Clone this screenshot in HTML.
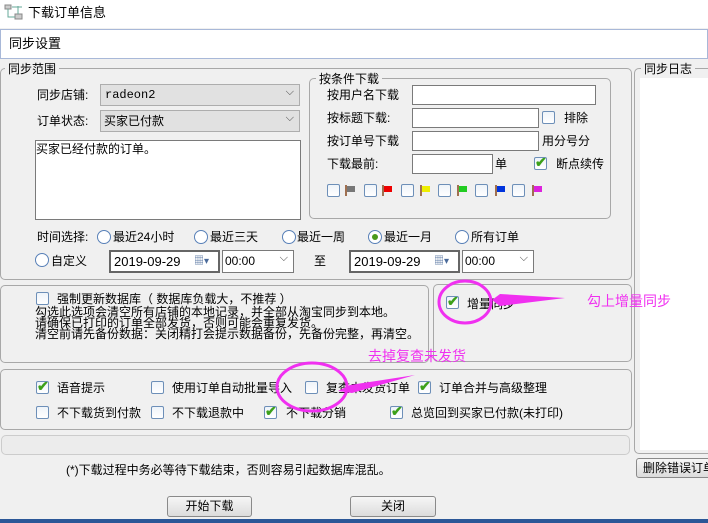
<!DOCTYPE html>
<html><head><meta charset="utf-8"><style>
*{margin:0;padding:0;box-sizing:border-box}
body{width:708px;height:523px;background:#f0f0f0;position:relative;overflow:hidden;font-family:"Liberation Sans","Noto Sans CJK SC",sans-serif;font-size:12px;color:#000}
.a{position:absolute;white-space:nowrap;line-height:14px}
.g{position:absolute;border:1px solid #a8a8a8;border-radius:5px}
.in{position:absolute;background:#fff;border:1px solid #7a7a7a}
.cb{position:absolute;width:13px;height:13px;border:1px solid #6d8fb8;background:linear-gradient(#eef3f9,#fff);border-radius:2px}
.ck::after{content:"✔";position:absolute;left:0;top:-4px;color:#3ca01a;font-size:14px;font-weight:bold}
.rd{position:absolute;width:14px;height:14px;border:1px solid #5880b8;border-radius:50%;background:#fff}
.rd.on::after{content:"";position:absolute;left:3px;top:3px;width:6px;height:6px;border-radius:50%;background:#4a9a1a}
.cmb{position:absolute;background:#e1e1e1;border:1px solid #adadad}
.cmb::after,.tm::after{content:"⌵";position:absolute;right:5px;top:1px;font-size:11px;color:#444}
.btn{position:absolute;border:1px solid #8a8a8a;border-radius:3px;background:linear-gradient(#f6f6f6,#dcdcdc);text-align:center;line-height:19px}
.flag{position:absolute;width:12px;height:10px}
.flag::before{content:"";position:absolute;left:0;top:0;width:2px;height:11px;background:#a07050}
.flag::after{content:"";position:absolute;left:2px;top:1px;width:8px;height:6px;background:var(--c)}
.m{color:#f030f0}
</style></head><body>
<div class="a" style="left:0;top:0;width:708px;height:28px;background:#fff"></div>
<svg class="a" style="left:4px;top:3px" width="20" height="18"><rect x="1" y="2" width="6" height="4" fill="#ccc" stroke="#888"/><rect x="11" y="11" width="7" height="5" fill="#ccc" stroke="#888"/><path d="M4 6v8h7M14 3v8M8 4h10" stroke="#6a9" fill="none"/></svg>
<div class="a" style="left:28px;top:6px;font-size:13px">下载订单信息</div>
<div class="a" style="left:0;top:29px;width:708px;height:30px;background:#fff;border:1px solid #a8b8d8"></div>
<div class="a" style="left:9px;top:37px;font-size:13px">同步设置</div>

<div class="g" style="left:0;top:68px;width:632px;height:212px"></div>
<div class="a" style="left:5px;top:62px;background:#f0f0f0;padding:0 3px;font-size:12px">同步范围</div>
<div class="g" style="left:634px;top:68px;width:80px;height:386px"></div>
<div class="a" style="left:640px;top:78px;width:70px;height:372px;background:#fff"></div>
<div class="a" style="left:641px;top:62px;background:#f0f0f0;padding:0 3px">同步日志</div>

<div class="a" style="left:37px;top:88px">同步店铺:</div>
<div class="cmb" style="left:100px;top:84px;width:200px;height:22px"><span class="a" style="left:4px;top:3px;font-family:'Liberation Mono',monospace">radeon2</span></div>
<div class="a" style="left:37px;top:114px">订单状态:</div>
<div class="cmb" style="left:100px;top:110px;width:200px;height:22px"><span class="a" style="left:3px;top:3px">买家已付款</span></div>
<div class="in" style="left:35px;top:140px;width:266px;height:80px"><span class="a" style="left:0;top:1px">买家已经付款的订单。</span></div>

<div class="a" style="left:37px;top:230px">时间选择:</div>
<div class="rd" style="left:97px;top:230px"></div><div class="a" style="left:113px;top:230px">最近24小时</div>
<div class="rd" style="left:194px;top:230px"></div><div class="a" style="left:210px;top:230px">最近三天</div>
<div class="rd" style="left:282px;top:230px"></div><div class="a" style="left:297px;top:230px">最近一周</div>
<div class="rd on" style="left:368px;top:230px"></div><div class="a" style="left:384px;top:230px">最近一月</div>
<div class="rd" style="left:455px;top:230px"></div><div class="a" style="left:471px;top:230px">所有订单</div>
<div class="rd" style="left:35px;top:253px"></div><div class="a" style="left:51px;top:254px">自定义</div>
<div class="in" style="left:109px;top:250px;width:111px;height:23px;border:2px solid #666"><span class="a" style="left:3px;top:3px;font-size:13px">2019-09-29</span><span class="a" style="left:83px;top:3px;color:#4a6a9a;font-size:10px">▦▾</span></div>
<div class="in tm" style="left:222px;top:250px;width:72px;height:23px"><span class="a" style="left:2px;top:3px">00:00</span></div>
<div class="a" style="left:314px;top:254px">至</div>
<div class="in" style="left:349px;top:250px;width:111px;height:23px;border:2px solid #666"><span class="a" style="left:3px;top:3px;font-size:13px">2019-09-29</span><span class="a" style="left:83px;top:3px;color:#4a6a9a;font-size:10px">▦▾</span></div>
<div class="in tm" style="left:462px;top:250px;width:72px;height:23px"><span class="a" style="left:2px;top:3px">00:00</span></div>

<div class="g" style="left:309px;top:78px;width:302px;height:141px"></div>
<div class="a" style="left:316px;top:72px;background:#f0f0f0;padding:0 3px">按条件下载</div>
<div class="a" style="left:327px;top:88px">按用户名下载</div><div class="in" style="left:412px;top:85px;width:184px;height:20px"></div>
<div class="a" style="left:327px;top:111px">按标题下载:</div><div class="in" style="left:412px;top:108px;width:127px;height:20px"></div>
<div class="cb" style="left:542px;top:111px"></div><div class="a" style="left:564px;top:111px">排除</div>
<div class="a" style="left:327px;top:134px">按订单号下载</div><div class="in" style="left:412px;top:131px;width:127px;height:20px"></div>
<div class="a" style="left:542px;top:134px">用分号分</div>
<div class="a" style="left:327px;top:157px">下载最前:</div><div class="in" style="left:412px;top:154px;width:81px;height:20px"></div>
<div class="a" style="left:495px;top:157px">单</div>
<div class="cb ck" style="left:534px;top:157px"></div><div class="a" style="left:556px;top:157px">断点续传</div>
<div class="cb" style="left:327px;top:184px"></div><div class="flag" style="left:345px;top:185px;--c:#777"></div>
<div class="cb" style="left:364px;top:184px"></div><div class="flag" style="left:382px;top:185px;--c:#e00"></div>
<div class="cb" style="left:401px;top:184px"></div><div class="flag" style="left:420px;top:185px;--c:#ee0"></div>
<div class="cb" style="left:438px;top:184px"></div><div class="flag" style="left:457px;top:185px;--c:#2c2"></div>
<div class="cb" style="left:475px;top:184px"></div><div class="flag" style="left:495px;top:185px;--c:#03d"></div>
<div class="cb" style="left:512px;top:184px"></div><div class="flag" style="left:532px;top:185px;--c:#d2d"></div>

<div class="g" style="left:0;top:285px;width:429px;height:78px"></div>
<div class="cb" style="left:36px;top:292px"></div>
<div class="a" style="left:57px;top:292px">强制更新数据库（ 数据库负载大，不推荐 ）</div>
<div class="a" style="left:35px;top:307px;line-height:11px">勾选此选项会清空所有店铺的本地记录，并全部从淘宝同步到本地。<br>请确保已打印的订单全部发货，否则可能会重复发货。<br>清空前请先备份数据：关闭精打会提示数据备份，先备份完整，再清空。</div>
<div class="g" style="left:433px;top:284px;width:199px;height:78px"></div>
<div class="cb ck" style="left:446px;top:296px"></div><div class="a" style="left:467px;top:297px">增量同步</div>

<div class="g" style="left:0;top:369px;width:632px;height:61px"></div>
<div class="cb ck" style="left:36px;top:381px"></div><div class="a" style="left:57px;top:381px">语音提示</div>
<div class="cb" style="left:151px;top:381px"></div><div class="a" style="left:172px;top:381px">使用订单自动批量导入</div>
<div class="cb" style="left:305px;top:381px"></div><div class="a" style="left:326px;top:381px">复查未发货订单</div>
<div class="cb ck" style="left:418px;top:381px"></div><div class="a" style="left:439px;top:381px">订单合并与高级整理</div>
<div class="cb" style="left:36px;top:406px"></div><div class="a" style="left:57px;top:406px">不下载货到付款</div>
<div class="cb" style="left:151px;top:406px"></div><div class="a" style="left:172px;top:406px">不下载退款中</div>
<div class="cb ck" style="left:264px;top:406px"></div><div class="a" style="left:286px;top:406px">不下载分销</div>
<div class="cb ck" style="left:390px;top:406px"></div><div class="a" style="left:411px;top:406px">总览回到买家已付款(未打印)</div>

<div class="g" style="left:1px;top:435px;width:629px;height:20px;background:#ececec;border-color:#ccc"></div>
<div class="a" style="left:66px;top:463px">(*)下载过程中务必等待下载结束，否则容易引起数据库混乱。</div>
<div class="btn" style="left:167px;top:496px;width:85px;height:21px">开始下载</div>
<div class="btn" style="left:350px;top:496px;width:86px;height:21px">关闭</div>
<div class="btn" style="left:636px;top:458px;width:80px;height:20px;text-align:left;padding-left:6px">删除错误订单</div>
<div class="a" style="left:0;top:519px;width:708px;height:4px;background:#2b5797"></div>

<svg class="a" style="left:0;top:0" width="708" height="523">
<ellipse cx="465" cy="302" rx="26" ry="21" fill="none" stroke="#f030f0" stroke-width="3"/>
<path d="M565 298 L500 294 L492 300 L500 306 Z" fill="#f030f0"/>
<ellipse cx="312" cy="387" rx="35" ry="24" fill="none" stroke="#f030f0" stroke-width="3"/>
<path d="M415 375 L350 385 L338 391 L352 393 Z" fill="#f030f0"/>
</svg>
<div class="a m" style="left:587px;top:294px;font-size:14px">勾上增量同步</div>
<div class="a m" style="left:368px;top:349px;font-size:14px">去掉复查未发货</div>
</body></html>
